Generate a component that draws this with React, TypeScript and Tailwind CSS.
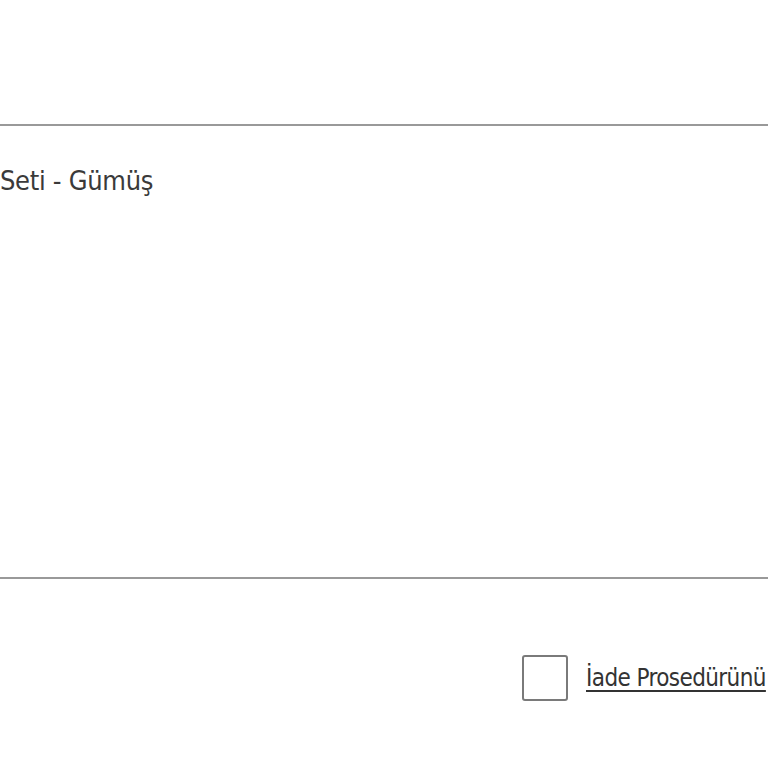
import React from 'react';

const App: React.FC = () => {
  return (
    <div
      className="w-[768px] h-[768px] overflow-hidden bg-white text-[#3a3a3a]"
      style={{ fontFamily: '"DejaVu Sans Condensed", "DejaVu Sans", sans-serif' }}
    >
      <div className="h-[124px]" />
      <div className="h-[2px] bg-[#999]" />
      <div className="h-[451px] pt-[37px]">
        <p className="text-[27px] leading-[36px] whitespace-nowrap tracking-[-0.3px]">Seti - Gümüş</p>
      </div>
      <div className="h-[2px] bg-[#999]" />
      <div className="flex items-center pl-[522px] pt-[76px] gap-[18px] whitespace-nowrap">
        <span className="w-[46px] h-[46px] shrink-0 rounded-[3px] border-2 border-[#7a7a7a] bg-white" />
        <a className="text-[24px] leading-[30px] underline underline-offset-[4px] decoration-[2px] text-[#333] tracking-[-0.6px]">
          İade Prosedürünü
        </a>
      </div>
    </div>
  );
};

export default App;
